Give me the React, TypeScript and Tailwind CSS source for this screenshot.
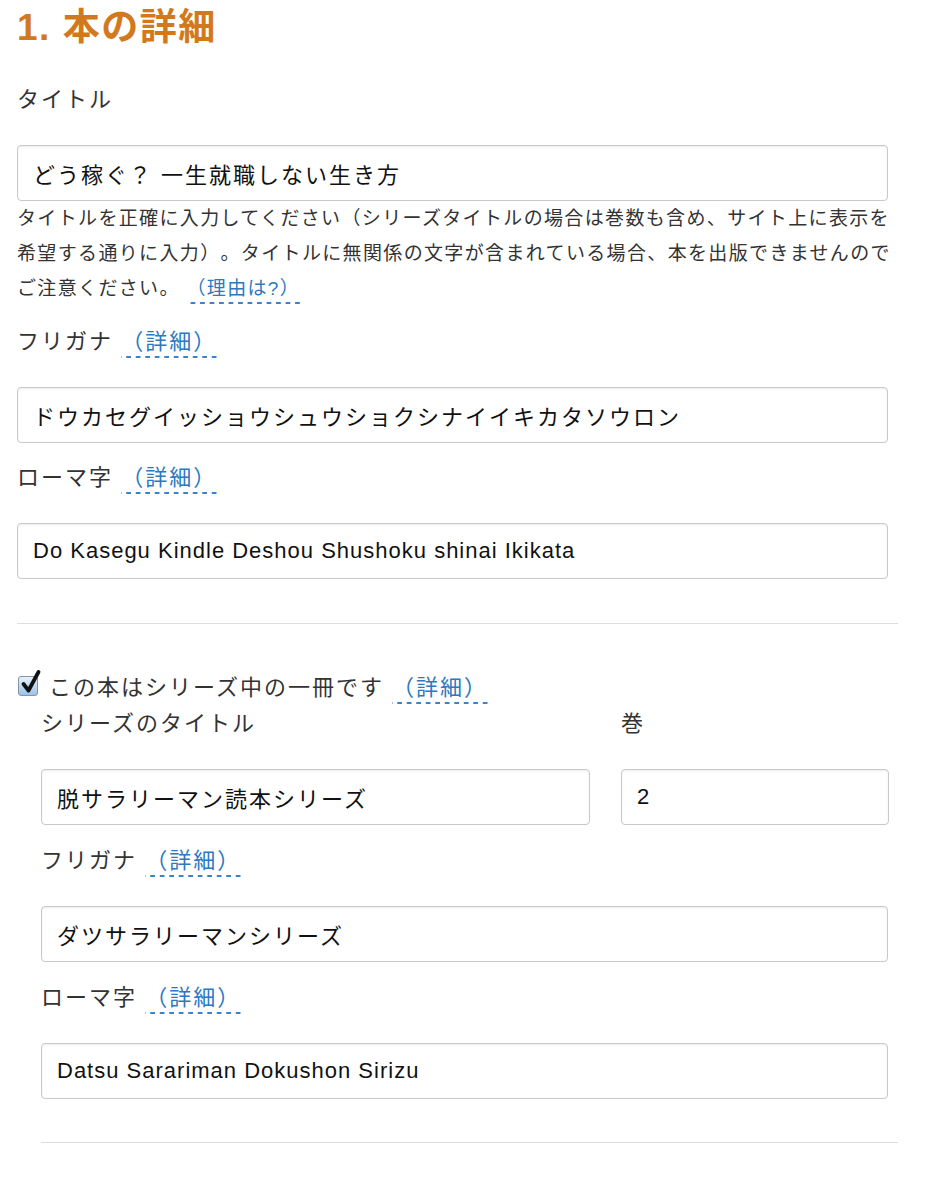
import React from "react";

const base = "font-['Liberation_Sans','Noto_Sans_CJK_JP',sans-serif] [text-spacing-trim:space-all]";

// dashed underline drawn as a repeating gradient so the dash length matches
const dashed =
    "bg-[linear-gradient(to_right,#3a82c9_55%,transparent_55%)] bg-[length:9.5px_2px] bg-repeat-x bg-bottom";

function DetailLink({ text = "（詳細）" }: { text?: string }) {
    return <span className={`inline-block h-[30px] leading-[28px] text-[#2b79c2] ${dashed}`}>{text}</span>;
}

function Label({ text, link }: { text: string; link?: boolean }) {
    return (
        <div className="h-[30px] leading-[30px] text-[22px] tracking-[2px] text-[#333] whitespace-nowrap">
            {text}
            {link && (
                <>
                    {" "}
                    <DetailLink />
                </>
            )}
        </div>
    );
}

function Field({ value, latin, className = "" }: { value: string; latin?: boolean; className?: string }) {
    return (
        <input
            readOnly
            defaultValue={value}
            className={`block h-[56px] rounded-[4px] border border-[#c9c9c9] bg-white pl-[15px] text-[22px] text-[#111] outline-none shadow-[inset_0_1px_2px_rgba(0,0,0,0.08)] ${latin ? "tracking-[1px]" : "tracking-[2px]"} ${className}`}
        />
    );
}

function CheckBox() {
    return (
        <span className="relative inline-block w-[20px] h-[20px] mt-[3px] rounded-[3px] border border-[#8394a6] bg-gradient-to-b from-[#e6f1fb] to-[#9cc2e7]">
            <svg className="absolute left-[1px] top-[-8px]" width="22" height="26" viewBox="0 0 22 26">
                <path d="M3.5 15 L8.5 21.5 L18.5 3" fill="none" stroke="#111" strokeWidth="3.8" strokeLinecap="round" strokeLinejoin="round" />
            </svg>
        </span>
    );
}

export default function App() {
    return (
        <div className={`${base} min-h-[1186px] w-[940px] bg-white pl-[17px] pr-[42px] pt-[8px]`}>
            {/* Heading */}
            <h1 className="h-[40px] leading-[40px] text-[37px] font-bold tracking-[1.5px] text-[#d2791d]">1. 本の詳細</h1>

            {/* Title */}
            <div className="mt-[37px]">
                <Label text="タイトル" />
            </div>
            <Field value="どう稼ぐ？ 一生就職しない生き方" className="mt-[30px] w-[871px]" />
            <p className="text-[19px] leading-[35px] tracking-[1.35px] text-[#333] whitespace-nowrap">
                タイトルを正確に入力してください（シリーズタイトルの場合は巻数も含め、サイト上に表示を
                <br />
                希望する通りに入力）。タイトルに無関係の文字が含まれている場合、本を出版できませんので
                <br />
                ご注意ください。{" "}
                <span className={`inline-block leading-[30px] text-[#2b79c2] ${dashed}`}>（理由は?）</span>
            </p>

            {/* Furigana */}
            <div className="mt-[21px]">
                <Label text="フリガナ" link />
            </div>
            <Field value="ドウカセグイッショウシュウショクシナイイキカタソウロン" className="mt-[30px] w-[871px]" />

            {/* Romaji */}
            <div className="mt-[20px]">
                <Label text="ローマ字" link />
            </div>
            <Field value="Do Kasegu Kindle Deshou Shushoku shinai Ikikata" latin className="mt-[30px] w-[871px]" />

            <div className="mt-[44px] h-px w-[881px] bg-[#dedede]" />

            {/* Series checkbox */}
            <div className="mt-[49px] flex h-[30px] items-center">
                <span className="ml-[1px]">
                    <CheckBox />
                </span>
                <span className="ml-[11px] text-[22px] tracking-[2px] text-[#333] whitespace-nowrap leading-[30px]">
                    この本はシリーズ中の一冊です <DetailLink />
                </span>
            </div>

            <div className="pl-[24px]">
                <div className="mt-[6px] grid grid-cols-[549px_268px] gap-x-[31px]">
                    <Label text="シリーズのタイトル" />
                    <Label text="巻" />
                    <Field value="脱サラリーマン読本シリーズ" className="mt-[30px] w-[549px]" />
                    <Field value="2" latin className="mt-[30px] w-[268px]" />
                </div>

                <div className="mt-[21px]">
                    <Label text="フリガナ" link />
                </div>
                <Field value="ダツサラリーマンシリーズ" className="mt-[30px] w-[847px]" />

                <div className="mt-[21px]">
                    <Label text="ローマ字" link />
                </div>
                <Field value="Datsu Sarariman Dokushon Sirizu" latin className="mt-[30px] w-[847px]" />

                <div className="mt-[43px] h-px w-[857px] bg-[#dedede]" />
            </div>
        </div>
    );
}
